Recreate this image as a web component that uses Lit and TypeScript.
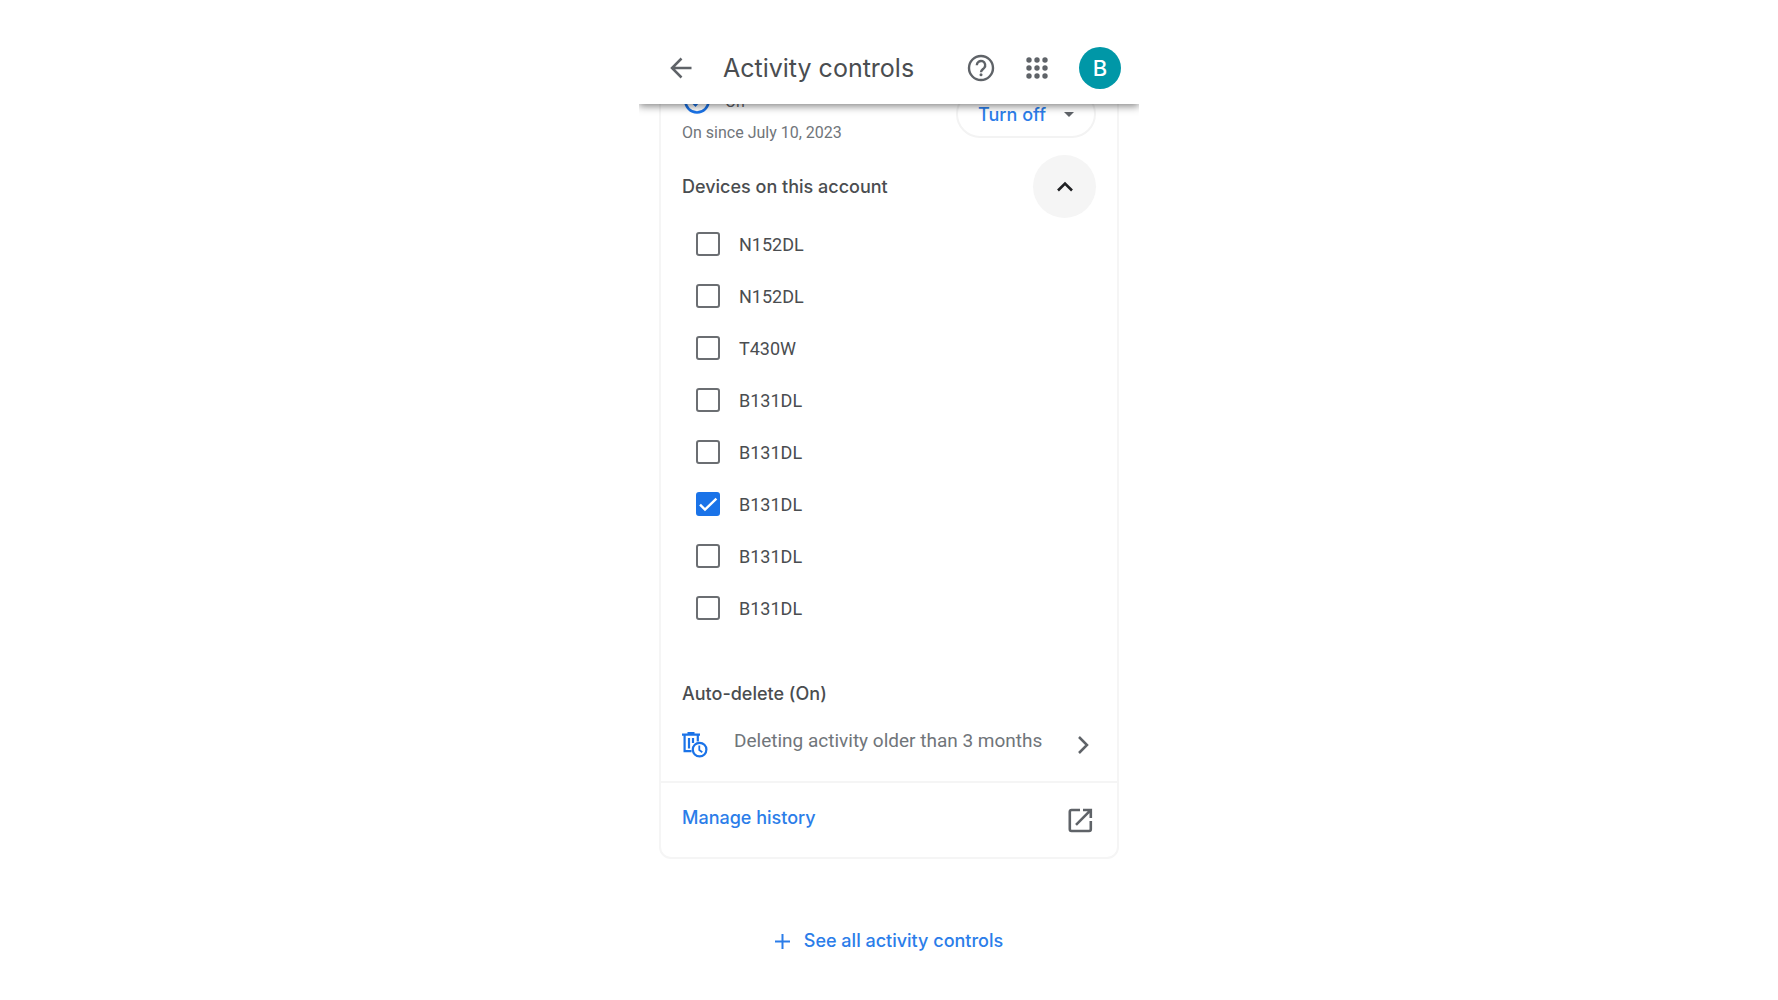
import { LitElement, html, css, svg } from "lit";
import { customElement, state } from "lit/decorators.js";

interface Device {
  name: string;
  checked: boolean;
}

@customElement("app-root")
export class AppRoot extends LitElement {
  @state() private devices: Device[] = [
    { name: "N152DL", checked: false },
    { name: "N152DL", checked: false },
    { name: "T430W", checked: false },
    { name: "B131DL", checked: false },
    { name: "B131DL", checked: false },
    { name: "B131DL", checked: true },
    { name: "B131DL", checked: false },
    { name: "B131DL", checked: false },
  ];

  @state() private expanded = true;

  static styles = css`
    :host {
      display: block;
      min-height: 100vh;
      background: #fff;
      color: #4a4d50;
      font-family: "Google Sans", Inter, Roboto, sans-serif;
    }
    * {
      box-sizing: border-box;
    }
    button {
      margin: 0;
      padding: 0;
      border: 0;
      background: none;
      color: inherit;
      font: inherit;
      cursor: pointer;
    }
    a {
      color: #2b7de9;
      text-decoration: none;
    }
    svg {
      display: block;
      flex: none;
    }
    h1,
    h2 {
      margin: 0;
      font-weight: 500;
    }
    .page {
      max-width: 500px;
      margin: 0 auto;
    }
    .bar {
      position: sticky;
      top: 0;
      z-index: 1;
      display: flex;
      align-items: center;
      padding: 32px 18px 0 28px;
      height: 104px;
      background: #fff;
      box-shadow: 0 2px 8px rgba(0, 0, 0, 0.5);
      clip-path: inset(0 0 -12px 0);
      color: #5f6368;
    }
    .title {
      flex: 1;
      margin-left: 28px;
      color: #4a4d50;
      font-size: 25px;
      line-height: 32px;
      font-weight: 400;
    }
    .tools {
      display: flex;
      align-items: center;
    }
    .apps {
      margin: 0 31px;
    }
    .avatar {
      width: 42px;
      height: 42px;
      border-radius: 50%;
      background: #0097a7;
      color: #fff;
      font-size: 22px;
      line-height: 42px;
      font-weight: 500;
      text-align: center;
    }
    .card {
      margin: -24px 20px 0;
      border: 2px solid #f5f5f5;
      border-radius: 12px;
    }
    .body {
      padding: 5px 21px 20px;
    }
    .status {
      display: flex;
      justify-content: space-between;
      align-items: flex-start;
    }
    .on {
      display: flex;
      align-items: center;
      gap: 13px;
      height: 28px;
      font-family: Roboto, sans-serif;
      font-size: 16px;
      color: #5f6368;
    }
    .since {
      margin-top: 8px;
      font-family: Roboto, sans-serif;
      font-size: 16px;
      line-height: 20px;
      color: #70757a;
    }
    .turn {
      display: flex;
      align-items: center;
      gap: 18px;
      margin-top: 3px;
      padding: 0 20px;
      height: 48px;
      border: 2px solid #f3f3f3;
      border-radius: 24px;
      color: #2b7de9;
      font-size: 18px;
      font-weight: 500;
    }
    .turn svg {
      color: #5f6368;
    }
    .heading {
      font-size: 18px;
      line-height: 24px;
    }
    .expander {
      display: flex;
      align-items: center;
      justify-content: space-between;
      margin-top: 12px;
    }
    .toggle {
      display: grid;
      place-items: center;
      width: 63px;
      height: 63px;
      border-radius: 50%;
      background: #f5f5f5;
      color: #202124;
    }
    .list {
      margin: 0 0 48px;
      padding: 0 0 0 14px;
      list-style: none;
    }
    .device {
      display: flex;
      align-items: center;
      gap: 19px;
      height: 52px;
      font-family: Roboto, sans-serif;
      font-size: 18px;
    }
    .box {
      display: grid;
    }
    .box input,
    .box svg {
      grid-area: 1 / 1;
    }
    .box input {
      appearance: none;
      margin: 0;
      width: 24px;
      height: 24px;
      border: 2px solid #6b6e72;
      border-radius: 3px;
    }
    .box input:checked {
      border-color: #1a73e8;
      background: #1a73e8;
    }
    .box svg {
      pointer-events: none;
      visibility: hidden;
    }
    .box input:checked + svg {
      visibility: visible;
    }
    .auto {
      display: flex;
      align-items: center;
      width: 100%;
      margin-top: 23px;
      text-align: left;
    }
    .rule {
      flex: 1;
      margin: 0 0 8px 26px;
      font-family: Roboto, sans-serif;
      font-size: 19px;
      line-height: 24px;
      color: #70757a;
    }
    .manage {
      display: flex;
      align-items: center;
      justify-content: space-between;
      padding: 0 21px;
      height: 76px;
      border-top: 2px solid #f5f5f5;
      font-size: 18px;
      font-weight: 500;
    }
    .manage span {
      margin-bottom: 6px;
    }
    .manage svg {
      color: #5f6368;
    }
    .all {
      display: flex;
      align-items: center;
      justify-content: center;
      gap: 14px;
      margin-top: 70px;
      font-size: 18px;
      line-height: 24px;
      font-weight: 500;
    }
  `;

  private setChecked(index: number, checked: boolean) {
    this.devices = this.devices.map((d, i) => (i === index ? { ...d, checked } : d));
  }

  private renderDevice = (device: Device, i: number) => html`
    <li>
      <label class="device">
        <span class="box">
          <input
            type="checkbox"
            .checked=${device.checked}
            @change=${(e: Event) => this.setChecked(i, (e.target as HTMLInputElement).checked)}
          />
          <svg width="24" height="24" viewBox="0 0 24 24" fill="none" stroke="#fff" stroke-width="2.4">
            <path d="M4 12.6l5 5L20.4 6.6" />
          </svg>
        </span>
        <span>${device.name}</span>
      </label>
    </li>
  `;

  render() {
    const dots = [3, 11, 19].flatMap((y) =>
      [3, 11, 19].map((x) => svg`<circle cx=${x} cy=${y} r="2.7" />`),
    );
    return html`
      <div class="page">
        <header class="bar">
          <button aria-label="Back">
            <svg width="28" height="28" viewBox="0 0 28 28" fill="none" stroke="currentColor" stroke-width="2.5">
              <path d="M24.500 14H5.500M14.500 4.500L5 14l9.500 9.500" />
            </svg>
          </button>
          <h1 class="title">Activity controls</h1>
          <div class="tools">
            <button aria-label="Help">
              <svg width="28" height="28" viewBox="0 0 28 28" fill="none" stroke="currentColor" stroke-width="2.4">
                <circle cx="14" cy="14" r="12" />
                <path d="M9.800 11.200a4.200 4.200 0 1 1 7.300 2.800c-1.500 1.500-3.100 2.200-3.100 4.300" />
                <circle cx="14" cy="20.800" r="1.500" fill="currentColor" stroke="none" />
              </svg>
            </button>
            <button class="apps" aria-label="Apps">
              <svg width="22" height="22" viewBox="0 0 22 22" fill="currentColor">${dots}</svg>
            </button>
            <button class="avatar" aria-label="Account B">B</button>
          </div>
        </header>

        <main>
          <section class="card">
            <div class="body">
              <div class="status">
                <div>
                  <div class="on">
                    <svg width="30" height="28" viewBox="0 0 30 28" fill="none" stroke="#1a73e8" stroke-width="2.6">
                      <circle cx="15" cy="14" r="11.500" />
                      <path d="M9 13.500l4.500 4.500L21.500 9" />
                    </svg>
                    <span>On</span>
                  </div>
                  <div class="since">On since July 10, 2023</div>
                </div>
                <button class="turn">
                  Turn off
                  <svg width="10" height="5" viewBox="0 0 10 5" fill="currentColor"><path d="M0 0h10L5 5z" /></svg>
                </button>
              </div>

              <div class="expander">
                <h2 class="heading">Devices on this account</h2>
                <button
                  class="toggle"
                  aria-label="Devices on this account"
                  aria-expanded=${this.expanded}
                  @click=${() => (this.expanded = !this.expanded)}
                >
                  <svg width="18" height="12" viewBox="0 0 18 12" fill="none" stroke="currentColor" stroke-width="2.6">
                    <path d="M2 9.500l7-7 7 7" />
                  </svg>
                </button>
              </div>
              ${this.expanded ? html`<ul class="list">${this.devices.map(this.renderDevice)}</ul>` : null}

              <h2 class="heading">Auto-delete (On)</h2>
              <button class="auto">
                <svg width="26" height="28" viewBox="0 0 26 28" fill="none" stroke="#1a73e8" stroke-width="2.200">
                  <path d="M0 3.600h18M5.500 2.200h7M2.600 4v16.200h7M15.800 4v6.500M7 7v10.500M11 7v5" />
                  <circle cx="17.600" cy="18.600" r="6.800" />
                  <path d="M17.300 14.500v4.500l3 2.200" stroke-width="1.800" />
                </svg>
                <span class="rule">Deleting activity older than 3 months</span>
                <svg width="18" height="20" viewBox="0 0 18 20" fill="none" stroke="#5f6368" stroke-width="2.500">
                  <path d="M1 2l8 8-8 8" />
                </svg>
              </button>
            </div>
            <a class="manage" href="#history">
              <span>Manage history</span>
              <svg width="28" height="28" viewBox="0 0 28 28" fill="none" stroke="currentColor" stroke-width="2.600">
                <path d="M12 4H3.500Q1.800 4 1.800 5.700V23.300Q1.800 25 3.500 25H21.100Q22.800 25 22.800 23.300V15M15 4h7.800v8M22.400 4.400L8 18.800" />
              </svg>
            </a>
          </section>
          <a class="all" href="#controls">
            <svg width="15" height="15" viewBox="0 0 15 15" fill="none" stroke="currentColor" stroke-width="2">
              <path d="M7.500 0v15M0 7.500h15" />
            </svg>
            See all activity controls
          </a>
        </main>
      </div>
    `;
  }
}
